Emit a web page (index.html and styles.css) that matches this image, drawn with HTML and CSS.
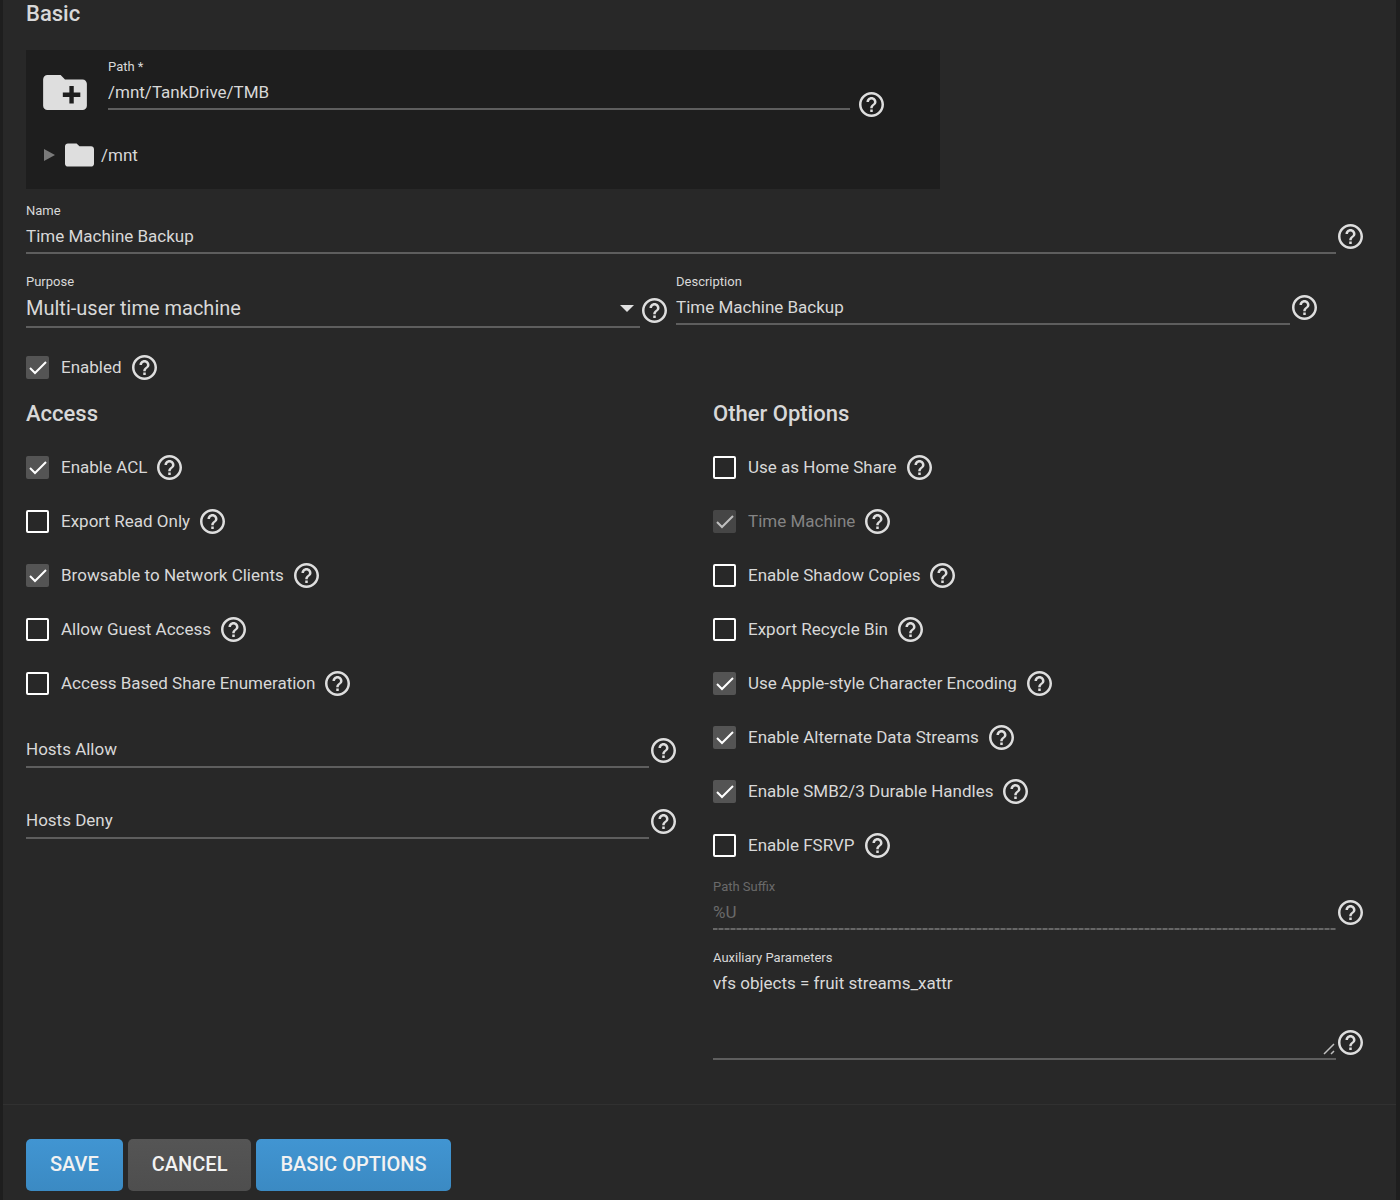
FILE: index.html
```html
<!DOCTYPE html>
<html lang="en">
<head>
    <meta charset="UTF-8">
    <meta name="viewport" content="width=device-width, initial-scale=1.0">
    <title>SMB Share</title>
    <link rel="stylesheet" href="styles.css">
</head>
<body>
    <!-- Shared icons -->
    <svg class="sprite" aria-hidden="true">
        <symbol id="icon-help" viewBox="2 2 20 20">
            <path d="M11 18h2v-2h-2v2zm1-16C6.48 2 2 6.48 2 12s4.480 10 10 10 10-4.480 10-10S17.520 2 12 2zm0 18c-4.410 0-8-3.590-8-8s3.590-8 8-8 8 3.590 8 8-3.590 8-8 8zm0-14c-2.210 0-4 1.790-4 4h2c0-1.100.9-2 2-2s2 .9 2 2c0 2-3 1.750-3 5h2c0-2.250 3-2.500 3-5 0-2.210-1.790-4-4-4z"/>
        </symbol>
        <symbol id="icon-folder" viewBox="2 4 20 16">
            <path d="M10 4H4c-1.100 0-2 .9-2 2v12c0 1.100.9 2 2 2h16c1.100 0 2-.9 2-2V8c0-1.100-.9-2-2-2h-8l-2-2z"/>
        </symbol>
        <symbol id="icon-folder-add" viewBox="2 4 20 16">
            <path d="M20 6h-8l-2-2H4c-1.110 0-2 .89-2 2v12c0 1.110.89 2 2 2h16c1.110 0 2-.89 2-2V8c0-1.110-.89-2-2-2zm-1 8h-3v3h-2v-3h-3v-2h3V9h2v3h3v2z"/>
        </symbol>
    </svg>

    <form class="share-form">
        <div class="form-body">
            <h2>Basic</h2>
            <div class="explorer">
                <div class="explorer-path">
                    <svg class="folder-add"><use href="#icon-folder-add"/></svg>
                    <div class="form-group">
                        <div class="field">
                            <label for="path">Path *</label>
                            <input type="text" id="path" name="path" value="/mnt/TankDrive/TMB" required>
                        </div>
                    </div>
                    <button type="button" class="help" aria-label="Help"><svg><use href="#icon-help"/></svg></button>
                </div>
                <button type="button" class="tree-node">
                    <svg class="tree-arrow" viewBox="0 0 11 12"><path d="M0 0l11 6-11 6z"/></svg>
                    <svg class="folder"><use href="#icon-folder"/></svg>
                    <span>/mnt</span>
                </button>
            </div>

            <div class="form-group">
                <div class="field">
                    <label for="name">Name</label>
                    <input type="text" id="name" name="name" value="Time Machine Backup">
                </div>
                <button type="button" class="help" aria-label="Help"><svg><use href="#icon-help"/></svg></button>
            </div>

            <div class="form-row">
                <div class="form-group">
                    <div class="field">
                        <label for="purpose">Purpose</label>
                        <select id="purpose" name="purpose">
                            <option>Multi-user time machine</option>
                        </select>
                    </div>
                    <button type="button" class="help" aria-label="Help"><svg><use href="#icon-help"/></svg></button>
                </div>
                <div class="form-group">
                    <div class="field">
                        <label for="description">Description</label>
                        <input type="text" id="description" name="description" value="Time Machine Backup">
                    </div>
                    <button type="button" class="help" aria-label="Help"><svg><use href="#icon-help"/></svg></button>
                </div>
            </div>

            <div class="check-row">
                <input type="checkbox" id="enabled" checked>
                <label for="enabled">Enabled</label>
                <button type="button" class="help" aria-label="Help"><svg><use href="#icon-help"/></svg></button>
            </div>

            <div class="columns">
                <section>
                    <h2>Access</h2>
                    <div class="check-list">
                        <div class="check-row">
                            <input type="checkbox" id="acl" checked>
                            <label for="acl">Enable ACL</label>
                            <button type="button" class="help" aria-label="Help"><svg><use href="#icon-help"/></svg></button>
                        </div>
                        <div class="check-row">
                            <input type="checkbox" id="readonly">
                            <label for="readonly">Export Read Only</label>
                            <button type="button" class="help" aria-label="Help"><svg><use href="#icon-help"/></svg></button>
                        </div>
                        <div class="check-row">
                            <input type="checkbox" id="browsable" checked>
                            <label for="browsable">Browsable to Network Clients</label>
                            <button type="button" class="help" aria-label="Help"><svg><use href="#icon-help"/></svg></button>
                        </div>
                        <div class="check-row">
                            <input type="checkbox" id="guest">
                            <label for="guest">Allow Guest Access</label>
                            <button type="button" class="help" aria-label="Help"><svg><use href="#icon-help"/></svg></button>
                        </div>
                        <div class="check-row">
                            <input type="checkbox" id="abse">
                            <label for="abse">Access Based Share Enumeration</label>
                            <button type="button" class="help" aria-label="Help"><svg><use href="#icon-help"/></svg></button>
                        </div>
                    </div>
                    <div class="form-group">
                        <div class="field field-empty">
                            <label for="hostsAllow">Hosts Allow</label>
                            <input type="text" id="hostsAllow" name="hostsAllow">
                        </div>
                        <button type="button" class="help" aria-label="Help"><svg><use href="#icon-help"/></svg></button>
                    </div>
                    <div class="form-group">
                        <div class="field field-empty">
                            <label for="hostsDeny">Hosts Deny</label>
                            <input type="text" id="hostsDeny" name="hostsDeny">
                        </div>
                        <button type="button" class="help" aria-label="Help"><svg><use href="#icon-help"/></svg></button>
                    </div>
                </section>

                <section>
                    <h2>Other Options</h2>
                    <div class="check-list">
                        <div class="check-row">
                            <input type="checkbox" id="home">
                            <label for="home">Use as Home Share</label>
                            <button type="button" class="help" aria-label="Help"><svg><use href="#icon-help"/></svg></button>
                        </div>
                        <div class="check-row">
                            <input type="checkbox" id="timemachine" checked disabled>
                            <label for="timemachine">Time Machine</label>
                            <button type="button" class="help" aria-label="Help"><svg><use href="#icon-help"/></svg></button>
                        </div>
                        <div class="check-row">
                            <input type="checkbox" id="shadowcopy">
                            <label for="shadowcopy">Enable Shadow Copies</label>
                            <button type="button" class="help" aria-label="Help"><svg><use href="#icon-help"/></svg></button>
                        </div>
                        <div class="check-row">
                            <input type="checkbox" id="recyclebin">
                            <label for="recyclebin">Export Recycle Bin</label>
                            <button type="button" class="help" aria-label="Help"><svg><use href="#icon-help"/></svg></button>
                        </div>
                        <div class="check-row">
                            <input type="checkbox" id="apple" checked>
                            <label for="apple">Use Apple-style Character Encoding</label>
                            <button type="button" class="help" aria-label="Help"><svg><use href="#icon-help"/></svg></button>
                        </div>
                        <div class="check-row">
                            <input type="checkbox" id="streams" checked>
                            <label for="streams">Enable Alternate Data Streams</label>
                            <button type="button" class="help" aria-label="Help"><svg><use href="#icon-help"/></svg></button>
                        </div>
                        <div class="check-row">
                            <input type="checkbox" id="durable" checked>
                            <label for="durable">Enable SMB2/3 Durable Handles</label>
                            <button type="button" class="help" aria-label="Help"><svg><use href="#icon-help"/></svg></button>
                        </div>
                        <div class="check-row">
                            <input type="checkbox" id="fsrvp">
                            <label for="fsrvp">Enable FSRVP</label>
                            <button type="button" class="help" aria-label="Help"><svg><use href="#icon-help"/></svg></button>
                        </div>
                    </div>
                    <div class="form-group">
                        <div class="field field-disabled">
                            <label for="suffix">Path Suffix</label>
                            <input type="text" id="suffix" name="suffix" value="%U" disabled>
                        </div>
                        <button type="button" class="help" aria-label="Help"><svg><use href="#icon-help"/></svg></button>
                    </div>
                    <div class="form-group">
                        <div class="field">
                            <label for="aux">Auxiliary Parameters</label>
                            <textarea id="aux" name="aux" spellcheck="false">vfs objects = fruit streams_xattr</textarea>
                        </div>
                        <button type="button" class="help" aria-label="Help"><svg><use href="#icon-help"/></svg></button>
                    </div>
                </section>
            </div>
        </div>

        <div class="form-actions">
            <button type="submit" class="btn btn-primary">SAVE</button>
            <button type="button" class="btn">CANCEL</button>
            <button type="button" class="btn btn-primary">BASIC OPTIONS</button>
        </div>
    </form>
</body>
</html>
```
FILE: styles.css
```css
* {
    box-sizing: border-box;
}
body {
    margin: 0;
    padding: 0 4px 0 3px;
    background-color: #1e1e1e;
    color: #d8d8d8;
    color-scheme: dark;
    font-family: Roboto, sans-serif;
    font-size: 17px;
}
.sprite {
    display: none;
}
svg {
    display: block;
    fill: #dedede;
}
input,
select,
textarea,
button {
    font: inherit;
    color: inherit;
}
.share-form {
    min-height: 100vh;
    background-color: #282828;
}
.form-body {
    padding: 0 33px 44px 23px;
}
h2 {
    margin: 0;
    font-size: 22px;
    line-height: 28px;
    font-weight: 500;
}

/* Path explorer */
.explorer {
    max-width: 914px;
    height: 139px;
    margin: 22px 0 14px;
    padding: 9px 56px 0 17px;
    background-color: #1e1e1e;
}
.explorer-path {
    display: flex;
    align-items: flex-end;
}
.explorer-path .form-group {
    flex: 1;
    margin: 0 9px 0 21px;
}
.explorer-path .help {
    margin-bottom: -7px;
}
.folder-add {
    width: 44px;
    height: 35px;
}
.tree-node {
    display: flex;
    align-items: center;
    margin-top: 33px;
    padding: 0;
    border: none;
    background: none;
    cursor: pointer;
}
.tree-arrow {
    width: 11px;
    height: 12px;
    margin: 0 10px 0 1px;
    fill: #7a7a7a;
}
.folder {
    width: 29px;
    height: 24px;
    margin-right: 7px;
}

/* Text fields */
.form-group {
    display: flex;
    align-items: flex-end;
    gap: 2px;
    margin-bottom: 20px;
}
.form-row {
    display: grid;
    grid-template-columns: 1fr 1fr;
    align-items: start;
    gap: 9px;
    padding-right: 46px;
    margin-bottom: 12px;
}
.form-row .form-group {
    margin-bottom: 0;
}
.field {
    position: relative;
    flex: 1;
    min-width: 0;
}
.field label {
    display: block;
    font-size: 13px;
    line-height: 16px;
}
.field input,
.field select,
.field textarea {
    display: block;
    width: 100%;
    height: 35px;
    padding: 0;
    border: none;
    border-bottom: 2px solid #5e5e5e;
    border-radius: 0;
    outline: none;
    background: none;
}
.field select {
    height: 38px;
    font-size: 20px;
    appearance: none;
    background: url("data:image/svg+xml,%3Csvg xmlns='http://www.w3.org/2000/svg' width='14' height='7'%3E%3Cpath d='M0 0h14l-7 7z' fill='%23e0e0e0'/%3E%3C/svg%3E") no-repeat right 6px center;
}
.field textarea {
    height: 94px;
    padding-top: 7px;
    line-height: 20px;
    resize: vertical;
}
.field textarea::-webkit-resizer {
    background: url("data:image/svg+xml,%3Csvg xmlns='http://www.w3.org/2000/svg' width='15' height='15'%3E%3Cpath d='M3 11L13 1M10 11l3-3' stroke='%23c0c0c0' stroke-width='1.500'/%3E%3C/svg%3E") no-repeat;
}
.field-empty {
    padding-top: 16px;
}
.field-empty label {
    position: absolute;
    left: 0;
    bottom: 2px;
    font-size: 17px;
    line-height: 33px;
}
.field-disabled {
    color: #6a6a6a;
}
.field-disabled input {
    padding-bottom: 2px;
    border-bottom: none;
    background: repeating-linear-gradient(to right, #666 0 4px, #484848 4px 6px) no-repeat bottom / 100% 2px;
}
.help {
    flex: none;
    width: 25px;
    height: 25px;
    margin-bottom: 5px;
    padding: 0;
    border: none;
    background: none;
    cursor: pointer;
}
.help svg {
    width: 25px;
    height: 25px;
}

/* Checkboxes */
.check-list {
    margin: 12px 0 7px;
}
.check-row {
    display: flex;
    align-items: center;
    height: 54px;
}
.check-row input {
    appearance: none;
    width: 23px;
    height: 23px;
    margin: 0 12px 0 0;
    border: 2px solid #fff;
    border-radius: 2px;
}
.check-row input:checked {
    border: none;
    background: #545454 url("data:image/svg+xml,%3Csvg xmlns='http://www.w3.org/2000/svg' width='23' height='23'%3E%3Cpath d='M4 12l5 5L20 6' fill='none' stroke='%23fff' stroke-width='2'/%3E%3C/svg%3E");
}
.check-row input:disabled {
    opacity: 0.7;
}
.check-row input:disabled + label {
    color: #848484;
}
.check-row .help {
    margin: 0 0 0 10px;
}
.columns {
    display: grid;
    grid-template-columns: 1fr 1fr;
    gap: 37px;
    margin-top: 6px;
}
.columns .form-group:last-child {
    margin-bottom: 0;
}

/* Buttons */
.form-actions {
    display: flex;
    gap: 5px;
    padding: 34px 23px 9px;
    border-top: 1px solid #313131;
}
.btn {
    height: 52px;
    padding: 0 24px 2px;
    border: none;
    border-radius: 5px;
    background: linear-gradient(#555, #4e4e4e);
    color: #f2f2f2;
    font-size: 20px;
    font-weight: 500;
    cursor: pointer;
}
.btn-primary {
    background: linear-gradient(#4195d2, #3b8ac3);
}
```
